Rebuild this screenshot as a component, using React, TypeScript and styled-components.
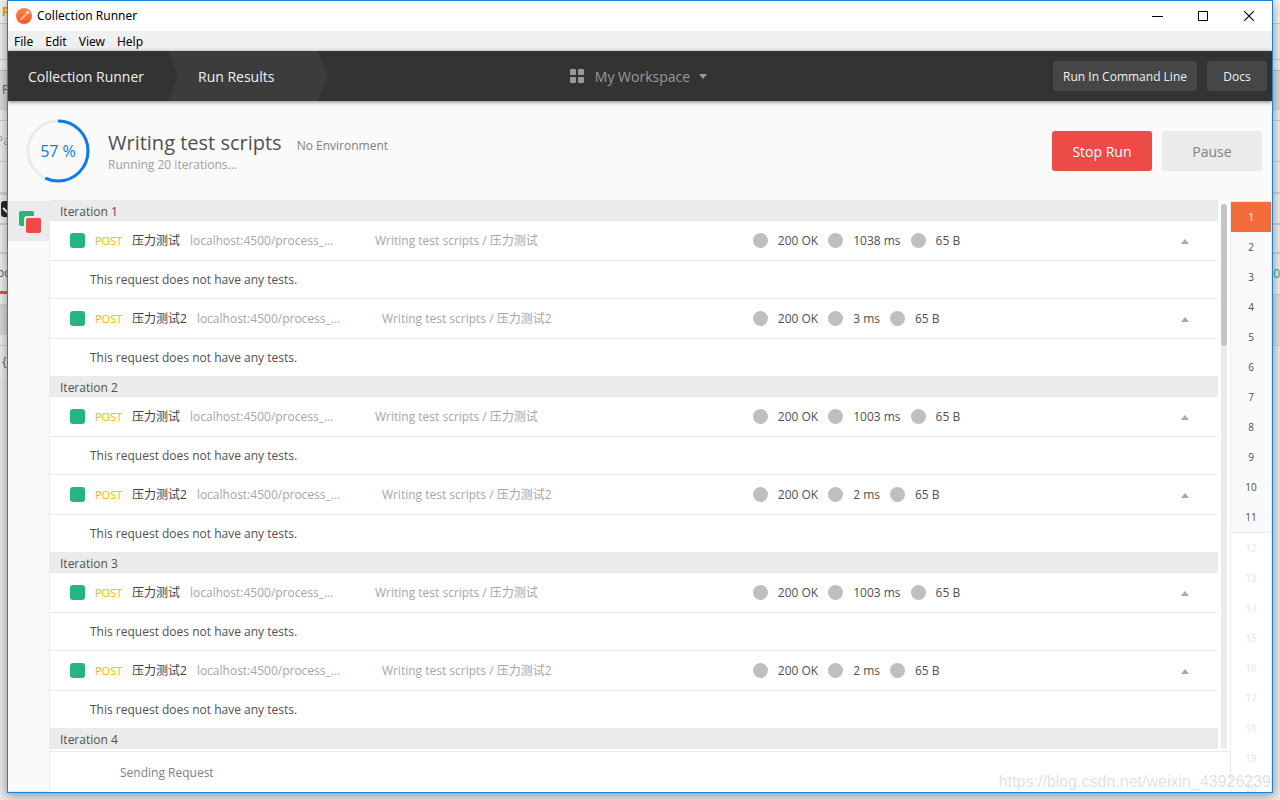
import React from "react";
import styled, { createGlobalStyle, css } from "styled-components";

const GlobalStyle = createGlobalStyle`
  *, *::before, *::after { box-sizing: border-box; }
  body {
    margin: 0;
    background: #e3e3e3;
    color: #505050;
    font-family: "Open Sans", "Noto Sans CJK SC", sans-serif;
    font-size: 12px;
    line-height: 16px;
  }
  button { font: inherit; border: 0; padding: 0; cursor: pointer; }
  h1, h2, p, ul, ol { margin: 0; padding: 0; font: inherit; }
  ul, ol { list-style: none; }
  a { color: inherit; text-decoration: none; }
`;

const Desktop = styled.div`
  position: relative;
  height: 100vh;
  min-height: 480px;
  padding: 0 7px 7px;
  overflow: hidden;
`;

/* The main application, mostly covered by the runner window */

const Backdrop = styled.div`
  position: absolute;
  inset: 0;
  display: flex;
  justify-content: space-between;
  background: #e8e8e8;
`;

const Sliver = styled.div`
  width: 10px;
  overflow: hidden;
  white-space: nowrap;
`;

const Strip = styled.div<{ $h: number; $bg?: string; $line?: string; $thick?: number; $ink?: string }>`
  display: flex;
  align-items: center;
  height: ${(p) => p.$h}px;
  background: ${(p) => p.$bg ?? "#ececec"};
  border-bottom: ${(p) => p.$thick ?? 1}px solid ${(p) => p.$line ?? "#cfcfcf"};
  color: ${(p) => p.$ink ?? "#606060"};
`;

const StripLabel = styled.span<{ $bold?: boolean; $end?: boolean }>`
  display: flex;
  width: 10px;
  padding-left: ${(p) => (p.$end ? 0 : "2px")};
  justify-content: ${(p) => (p.$end ? "flex-end" : "flex-start")};
  font-weight: ${(p) => (p.$bold ? 700 : 400)};
`;

const DarkCheck = styled.svg`
  width: 16px;
  height: 16px;
  flex: none;
`;

const Window = styled.div`
  position: relative;
  display: flex;
  flex-direction: column;
  height: 100%;
  background: #fff;
  border: 1px solid #1883d7;
  box-shadow: 0 2px 10px rgba(0, 0, 0, 0.4);
  overflow: hidden;
`;

const TitleBar = styled.div`
  flex: none;
  display: flex;
  align-items: center;
  height: 30px;
  padding-left: 8px;
  color: #000;
  font-family: "Noto Sans", sans-serif;
`;

const Logo = styled.svg`
  width: 16px;
  height: 16px;
  margin-right: 5px;
`;

const WindowTitle = styled.h1`
  flex: 1;
`;

const WindowButton = styled.button`
  display: flex;
  align-items: center;
  justify-content: center;
  width: 46px;
  height: 30px;
  background: transparent;
`;

const MenuBar = styled.nav`
  flex: none;
  display: flex;
  align-items: flex-end;
  gap: 12px;
  height: 20px;
  padding: 0 0 1px 6px;
  background: #f0f0f0;
  color: #000;
  font-family: "Noto Sans", sans-serif;
`;

const MenuItem = styled.button`
  background: transparent;
  color: inherit;
`;

const Header = styled.header`
  position: relative;
  flex: none;
  display: grid;
  grid-template-columns: 1fr auto 1fr;
  align-items: center;
  height: 50px;
  background: #333;
  box-shadow: 0 1px 4px rgba(0, 0, 0, 0.5);
  font-size: 14px;
  line-height: 20px;
`;

const Crumbs = styled.div`
  display: flex;
  color: #f0f0f0;
  font-weight: 500;
`;

const Crumb = styled.a<{ $current?: boolean }>`
  display: flex;
  align-items: center;
  width: 160px;
  height: 50px;
  padding: 2px 0 0 20px;
  ${(p) =>
    p.$current &&
    css`
      padding-left: 30px;
      background: #3c3c3c;
      clip-path: polygon(0 0, calc(100% - 10px) 0, 100% 50%, calc(100% - 10px) 100%, 0 100%, 10px 50%);
    `}
`;

const WorkspaceButton = styled.button`
  display: flex;
  align-items: center;
  padding-right: 3px;
  background: transparent;
  color: #999;
  font-weight: 500;
  svg { display: block; }
  svg:first-child { margin-right: 11px; }
  svg:last-child { margin-left: 9px; }
  span { padding-top: 2px; }
`;

const HeaderActions = styled.div`
  display: flex;
  justify-content: flex-end;
  gap: 10px;
  padding-right: 5px;
`;

const HeaderButton = styled.button`
  height: 30px;
  min-width: 60px;
  padding: 2px 10px 0;
  border-radius: 3px;
  background: #464646;
  color: #f0f0f0;
  font-size: 12px;
  font-weight: 500;
`;

const Summary = styled.section`
  flex: none;
  display: flex;
  align-items: center;
  height: 100px;
  padding: 0 10px 0 18px;
  background: #fafafa;
`;

const Ring = styled.div`
  display: grid;
  place-items: center;
  width: 64px;
  height: 64px;
  margin-right: 18px;
  color: #097bed;
  font-size: 16px;
  > * { grid-area: 1 / 1; }
`;

const SummaryText = styled.div`
  flex: 1;
  color: #a0a0a0;
`;

const TitleLine = styled.div`
  display: flex;
  align-items: baseline;
  gap: 15px;
  color: #808080;
`;

const RunTitle = styled.h2`
  color: #505050;
  font-size: 20px;
  line-height: 28px;
`;

const RunButton = styled.button<{ $primary?: boolean }>`
  width: 100px;
  height: 40px;
  margin-left: 10px;
  padding-top: 2px;
  border-radius: 3px;
  background: ${(p) => (p.$primary ? "#ed4b48" : "#ebebeb")};
  color: ${(p) => (p.$primary ? "#fff" : "#808080")};
  font-size: 14px;
  font-weight: ${(p) => (p.$primary ? 500 : 400)};
`;

const Body = styled.div`
  flex: 1;
  display: flex;
  min-height: 0;
`;

const Sidebar = styled.aside`
  flex: none;
  width: 42px;
  background: #fafafa;
  border-right: 1px solid #ebebeb;
  border-bottom: 1px solid #ebebeb;
`;

const FilterButton = styled.button`
  display: flex;
  align-items: center;
  justify-content: center;
  width: 41px;
  height: 40px;
  padding: 2px 0 0 3px;
  background: #ebebeb;
`;

const Main = styled.main`
  flex: 1;
  display: flex;
  flex-direction: column;
  min-width: 0;
`;

const Results = styled.div`
  flex: 1;
  display: flex;
  min-height: 0;
  margin-top: -1px;
  padding-bottom: 2px;
  border-bottom: 1px solid #ebebeb;
`;

const ResultList = styled.div`
  flex: 1;
  min-width: 0;
  overflow: hidden;
`;

const ScrollTrack = styled.div`
  flex: none;
  width: 6px;
  margin: 4px 3px 0;
  border-radius: 3px;
  background: #ebebeb;
`;

const ScrollThumb = styled.div`
  height: 26%;
  border-radius: 3px;
  background: #c4c4c4;
`;

const IterationTitle = styled.h2`
  height: 21px;
  padding-left: 10px;
  background: #ebebeb;
  line-height: 24px;
`;

const Request = styled.div`
  display: flex;
  align-items: center;
  height: 40px;
  border-bottom: 1px solid #ebebeb;
`;

const RequestInfo = styled.div`
  flex: none;
  display: flex;
  align-items: center;
  width: 60%;
  padding-left: 20px;
  white-space: nowrap;
  color: #a6a6a6;
`;

const PassMark = styled.span`
  width: 15px;
  height: 15px;
  border-radius: 3px;
  background: #26b47f;
`;

const Method = styled.span`
  width: 37px;
  padding-left: 10px;
  color: #ffb400;
  font-size: 11px;
`;

const RequestName = styled.span`
  margin: 0 10px;
  color: #404040;
`;

const RequestUrl = styled.span`
  width: 175px;
  margin-right: 10px;
  overflow: hidden;
  text-overflow: ellipsis;
`;

const Stats = styled.ul`
  flex: 1;
  display: flex;
  align-items: center;
  gap: 10px;
  padding-left: 2px;
`;

const Stat = styled.li`
  display: flex;
  align-items: center;
  gap: 10px;
  &::before {
    content: "";
    width: 15px;
    height: 15px;
    border-radius: 50%;
    background: #bfbfbf;
  }
`;

const Collapse = styled.button`
  display: flex;
  align-items: center;
  justify-content: center;
  width: 10px;
  height: 16px;
  margin-right: 28px;
  padding-top: 2px;
  background: transparent;
`;

const TestNote = styled.p`
  display: flex;
  align-items: center;
  height: 38px;
  padding-left: 40px;
  border-bottom: 1px solid #ebebeb;
  &:last-child {
    height: 37px;
    border-bottom: 0;
  }
`;

const Status = styled.footer`
  flex: none;
  display: flex;
  align-items: center;
  height: 40px;
  padding: 2px 0 0 70px;
  color: #808080;
`;

const Pager = styled.ol`
  flex: none;
  width: 42px;
  overflow: hidden;
  border: solid #ebebeb;
  border-width: 1px 1px 0;
`;

const PageGroup = styled.div<{ $done?: boolean }>`
  ${(p) =>
    p.$done &&
    css`
      background: #fafafa;
      border-bottom: 1px solid #ebebeb;
    `}
`;

const Page = styled.button<{ $active?: boolean }>`
  display: block;
  width: 100%;
  height: 30px;
  background: ${(p) => (p.$active ? "#f26b3a" : "transparent")};
  color: ${(p) => (p.$active ? "#fff" : "#505050")};
  font-size: 10px;
  &:disabled {
    color: #ebebeb;
    font-weight: 600;
  }
`;

const Watermark = styled.div`
  position: absolute;
  right: 9px;
  bottom: 8px;
  color: rgba(150, 150, 150, 0.3);
  font-family: "Liberation Sans", sans-serif;
  font-size: 16px;
  line-height: 20px;
`;

const iterations = [
  { id: 1, times: ["1038 ms", "3 ms"] },
  { id: 2, times: ["1003 ms", "2 ms"] },
  { id: 3, times: ["1003 ms", "2 ms"] },
  { id: 4, times: [] },
];
const names = ["压力测试", "压力测试2"];
const donePages = Array.from({ length: 11 }, (_, i) => i + 1);
const pendingPages = Array.from({ length: 9 }, (_, i) => i + 12);

const RequestRow = ({ name, time }: { name: string; time: string }) => (
  <>
    <Request>
      <RequestInfo>
        <PassMark />
        <Method>POST</Method>
        <RequestName>{name}</RequestName>
        <RequestUrl>localhost:4500/process_...</RequestUrl>
        <span>Writing test scripts / {name}</span>
      </RequestInfo>
      <Stats>
        <Stat>200 OK</Stat>
        <Stat>{time}</Stat>
        <Stat>65 B</Stat>
      </Stats>
      <Collapse aria-label="Collapse request">
        <svg width="8" height="5" viewBox="0 0 8 5">
          <path d="M0 5 4 0 8 5z" fill="#a9a9a9" />
        </svg>
      </Collapse>
    </Request>
    <TestNote>This request does not have any tests.</TestNote>
  </>
);

export default function App() {
  return (
    <Desktop>
      <GlobalStyle />
      <Backdrop aria-hidden="true">
        <Sliver>
          <Strip $h={24} $bg="#f2f2f2" $ink="#f0a800"><StripLabel $bold>P</StripLabel></Strip>
          <Strip $h={36} />
          <Strip $h={11} $line="#bcbcbc" />
          <Strip $h={39} $bg="#d9d9d9"><StripLabel>F</StripLabel></Strip>
          <Strip $h={11} />
          <Strip $h={41} $ink="#a0a0a0"><StripLabel $end>Pa</StripLabel></Strip>
          <Strip $h={33} $thick={3} />
          <Strip $h={30} $thick={2}>
            <DarkCheck viewBox="0 0 16 16">
              <rect x="1" width="15" height="16" rx="3" fill="#282828" />
              <path d="M3 7l4 4 6-7" stroke="#fff" strokeWidth="2" fill="none" />
            </DarkCheck>
          </Strip>
          <Strip $h={29} $thick={2} />
          <Strip $h={40} $thick={3} $line="#e0592b"><StripLabel $end>oc</StripLabel></Strip>
          <Strip $h={11} />
          <Strip $h={30} $bg="#d6d6d6" $line="#d6d6d6" />
          <Strip $h={11} />
          <Strip $h={32} $line="#ececec"><StripLabel>{"{"}</StripLabel></Strip>
        </Sliver>
        <Sliver>
          <Strip $h={24} $bg="#f2f2f2" />
          <Strip $h={36} />
          <Strip $h={11} $line="#bcbcbc" />
          <Strip $h={39} $bg="#d9d9d9" />
          <Strip $h={11} />
          <Strip $h={41} />
          <Strip $h={32} $thick={2} />
          <Strip $h={31} $thick={2} />
          <Strip $h={29} $thick={2} />
          <Strip $h={41} $ink="#26a57a"><StripLabel $end>20</StripLabel></Strip>
          <Strip $h={51} $bg="#dedede" />
        </Sliver>
      </Backdrop>

      <Window>
        <TitleBar>
          <Logo viewBox="0 0 16 16" aria-hidden="true">
            <defs>
              <linearGradient id="logoFill" x1="0" y1="0" x2="0" y2="1">
                <stop offset="0" stopColor="#ff8a45" />
                <stop offset="1" stopColor="#ff4f2e" />
              </linearGradient>
            </defs>
            <circle cx="8" cy="8" r="8" fill="url(#logoFill)" />
            <path d="M3.6 12.6 5.4 9.8 10 5.4 11.2 6.6 6.6 11.2z" fill="#ffd9c8" />
            <circle cx="11.6" cy="4.6" r="1.5" fill="#ffe3d6" />
            <path d="M4.4 12.2 10.8 5.8" stroke="#ff7a4a" strokeWidth=".5" />
          </Logo>
          <WindowTitle>Collection Runner</WindowTitle>
          <WindowButton aria-label="Minimize">
            <svg width="11" height="11"><path d="M0 5.5h11" stroke="#000" /></svg>
          </WindowButton>
          <WindowButton aria-label="Maximize">
            <svg width="10" height="10"><path d="M.5.5h9v9h-9z" stroke="#000" fill="none" /></svg>
          </WindowButton>
          <WindowButton aria-label="Close">
            <svg width="10" height="10"><path d="M0 0l10 10M10 0L0 10" stroke="#000" strokeWidth="1.1" /></svg>
          </WindowButton>
        </TitleBar>
        <MenuBar>
          {["File", "Edit", "View", "Help"].map((label) => (
            <MenuItem key={label}>{label}</MenuItem>
          ))}
        </MenuBar>
        <Header>
          <Crumbs>
            <Crumb href="#runner">Collection Runner</Crumb>
            <Crumb href="#results" $current>Run Results</Crumb>
          </Crumbs>
          <WorkspaceButton>
            <svg width="14" height="14" fill="#999">
              <rect width="6" height="6" rx="1" />
              <rect x="8" width="6" height="6" rx="1" />
              <rect y="8" width="6" height="6" rx="1" />
              <rect x="8" y="8" width="6" height="6" rx="1" />
            </svg>
            <span>My Workspace</span>
            <svg width="8" height="5"><path d="M0 0h8L4 5z" fill="#999" /></svg>
          </WorkspaceButton>
          <HeaderActions>
            <HeaderButton>Run In Command Line</HeaderButton>
            <HeaderButton>Docs</HeaderButton>
          </HeaderActions>
        </Header>
        <Summary>
          <Ring>
            <svg width="64" height="64" aria-hidden="true">
              <circle cx="32" cy="32" r="30" stroke="#ebebeb" strokeWidth="3" fill="none" />
              <circle
                cx="32" cy="32" r="30" stroke="#097bed" strokeWidth="3" fill="none"
                pathLength="100" strokeDasharray="57 43" transform="rotate(-90 32 32)"
              />
            </svg>
            <span>57 %</span>
          </Ring>
          <SummaryText>
            <TitleLine>
              <RunTitle>Writing test scripts</RunTitle>
              <span>No Environment</span>
            </TitleLine>
            <p>Running 20 iterations...</p>
          </SummaryText>
          <RunButton $primary>Stop Run</RunButton>
          <RunButton>Pause</RunButton>
        </Summary>
        <Body>
          <Sidebar>
            <FilterButton aria-label="Show all results">
              <svg width="24" height="24">
                <rect x="1" y="1" width="15" height="15" rx="2" fill="#26b47f" />
                <rect x="6" y="6" width="18" height="18" rx="3" fill="#ebebeb" />
                <rect x="8" y="8" width="15" height="15" rx="2" fill="#ed4b48" />
              </svg>
            </FilterButton>
          </Sidebar>
          <Main>
            <Results>
              <ResultList>
                {iterations.map((it) => (
                  <section key={it.id}>
                    <IterationTitle>Iteration {it.id}</IterationTitle>
                    {it.times.map((time, i) => (
                      <RequestRow key={names[i]} name={names[i]} time={time} />
                    ))}
                  </section>
                ))}
              </ResultList>
              <ScrollTrack><ScrollThumb /></ScrollTrack>
            </Results>
            <Status>Sending Request</Status>
          </Main>
          <Pager>
            <PageGroup $done>
              {donePages.map((n) => (
                <li key={n}><Page $active={n === 1}>{n}</Page></li>
              ))}
            </PageGroup>
            <PageGroup>
              {pendingPages.map((n) => (
                <li key={n}><Page disabled>{n}</Page></li>
              ))}
            </PageGroup>
          </Pager>
        </Body>
      </Window>
      <Watermark>https://blog.csdn.net/weixin_43926239</Watermark>
    </Desktop>
  );
}
